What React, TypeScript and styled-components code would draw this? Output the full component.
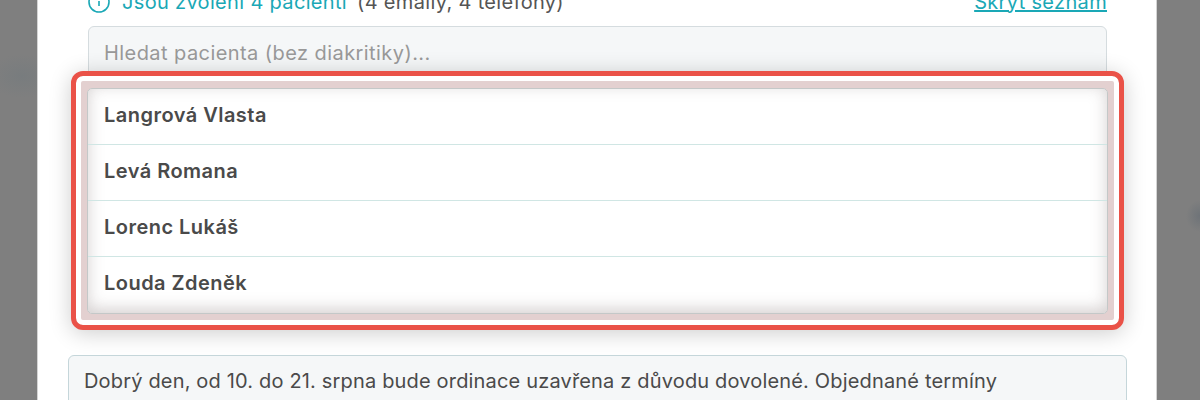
import React from "react";
import styled, { createGlobalStyle } from "styled-components";

const patients = ["Langrová Vlasta", "Levá Romana", "Lorenc Lukáš", "Louda Zdeněk"];

const GlobalStyle = createGlobalStyle`
  html, body {
    margin: 0;
    height: 400px;
    overflow: hidden;
    background: #7f7f7f;
    font-family: Inter, "Noto Sans", sans-serif;
  }
`;

const Backdrop = styled.div`
  height: 400px;
  overflow: hidden;
  padding: 0 43px 0 37px;
  background:
    radial-gradient(ellipse 14px 16px at 1200px 216px, #6e7378, transparent),
    radial-gradient(ellipse 34px 22px at 22px 76px, #787c7e, transparent),
    #7f7f7f;
`;

const Modal = styled.div`
  background: #fff;
  margin-top: -12px;
  padding: 0 29px 0 30px;
  height: 420px;
  border-left: 1px solid #d4d4d4;
  border-right: 1px solid #d4d4d4;
`;

const Summary = styled.div`
  display: flex;
  align-items: center;
  justify-content: space-between;
  height: 27px;
  margin: 0 20px 11px 19px;
  font-size: 20px;
  letter-spacing: 0.33px;
  color: #555;
`;

const Selected = styled.div`
  display: flex;
  align-items: center;
  gap: 10px;
`;

const InfoIcon = styled.svg`
  margin-right: 1px;
  flex: none;
`;

const Info = styled.span`
  color: #1aa8b6;
`;

const HideLink = styled.a`
  color: #1aa8b6;
  text-decoration: underline;
`;

const Search = styled.input`
  display: block;
  box-sizing: border-box;
  width: calc(100% - 40px);
  margin: 0 20px;
  height: 60px;
  padding: 0 15px 6px;
  border: 1px solid #d5dcdf;
  border-radius: 6px;
  background: #f5f7f8;
  font: 400 20px Inter, sans-serif;
  letter-spacing: 0.43px;
  &::placeholder {
    color: #999;
  }
`;

const Highlight = styled.div`
  position: relative;
  margin: -15px 3px 0;
  padding: 12px 11px 11px;
  border: 5px solid #ea5248;
  border-radius: 12px;
  background: #e3d0d0;
  box-shadow: inset 0 0 0 5px #fff, 0 3px 22px rgba(0, 0, 0, 0.2);
`;

const List = styled.div`
  border: 1px solid #c4c8c8;
  border-radius: 5px;
  background: #fff;
  box-shadow: inset 0 -4px 16px rgba(90, 70, 70, 0.26);
`;

const Row = styled.div`
  height: 56px;
  box-sizing: border-box;
  display: flex;
  align-items: center;
  padding: 0 0 3px 16px;
  border-bottom: 1px solid #d0e6e4;
  font-size: 20px;
  font-weight: 600;
  letter-spacing: 0.47px;
  color: #4a4a4a;
  &:last-child {
    border-bottom-color: transparent;
  }
`;

const Message = styled.div`
  margin-top: 25px;
  padding: 8px 15px;
  border: 1px solid #c5d6da;
  border-radius: 6px;
  background: #f5f7f8;
  font-size: 20px;
  letter-spacing: 0.17px;
  line-height: 34px;
  color: #4a4a4a;
  white-space: nowrap;
`;

export default function App() {
  return (
    <>
      <GlobalStyle />
      <Backdrop>
        <Modal>
          <Summary>
            <Selected>
              <InfoIcon width="24" height="24" viewBox="0 0 24 24" fill="none" stroke="#1aa8b6" strokeWidth="1.6">
                <circle cx="12" cy="12" r="10" />
                <path d="M12 16v-5M12 8h.01" />
              </InfoIcon>
              <Info>Jsou zvoleni 4 pacienti</Info>
              <span>(4 emaily, 4 telefony)</span>
            </Selected>
            <HideLink href="#">Skrýt seznam</HideLink>
          </Summary>
          <Search placeholder="Hledat pacienta (bez diakritiky)..." />
          <Highlight>
            <List>
              {patients.map((name) => (
                <Row key={name}>{name}</Row>
              ))}
            </List>
          </Highlight>
          <Message>
            Dobrý den, od 10. do 21. srpna bude ordinace uzavřena z důvodu dovolené. Objednané termíny
          </Message>
        </Modal>
      </Backdrop>
    </>
  );
}
